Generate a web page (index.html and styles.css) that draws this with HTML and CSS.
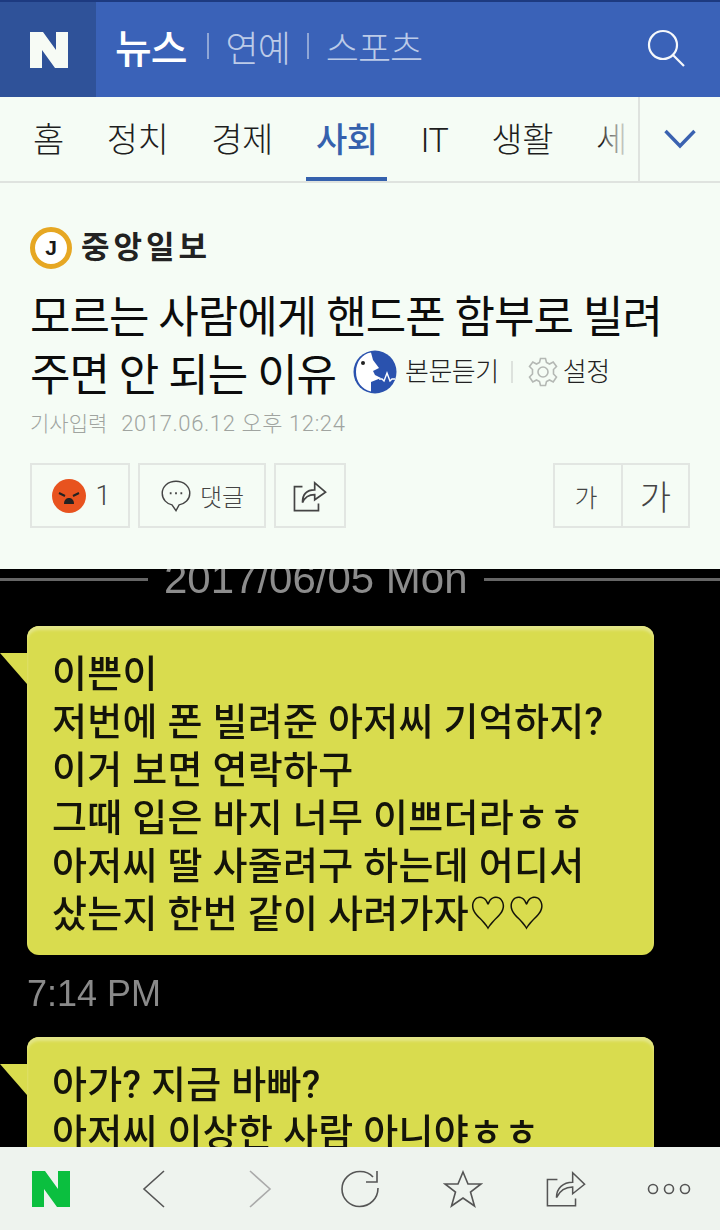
FILE: index.html
```html
<!DOCTYPE html>
<html lang="ko">
<head>
    <meta charset="UTF-8">
    <meta name="viewport" content="width=device-width, initial-scale=1.0">
    <title>모르는 사람에게 핸드폰 함부로 빌려주면 안 되는 이유</title>
    <link rel="stylesheet" href="styles.css">
</head>
<body>
    <header class="top-bar">
        <a class="logo-box">
            <svg width="38" height="36" viewBox="0 0 38 36"><path d="M0 0H13L26 18V0H38V36H25L12 18V36H0Z" fill="#f7fbf5"/></svg>
        </a>
        <nav class="sections">
            <span class="section-on">뉴스</span>
            <i class="section-sep"></i>
            <span>연예</span>
            <i class="section-sep"></i>
            <span>스포츠</span>
        </nav>
        <svg class="search-icon" width="38" height="38" viewBox="0 0 38 38" fill="none" stroke="#f5f8fb" stroke-width="2.2"><circle cx="16" cy="16" r="14"/><path d="M26 26L37 37"/></svg>
    </header>

    <div class="tabs">
        <div class="tab-list">
            <span class="tab">홈</span>
            <span class="tab">정치</span>
            <span class="tab">경제</span>
            <span class="tab tab-on">사회</span>
            <span class="tab">IT</span>
            <span class="tab">생활</span>
            <span class="tab">세</span>
        </div>
        <div class="tab-more">
            <svg width="32" height="20" viewBox="0 0 32 20" fill="none" stroke="#3a62b0" stroke-width="3.4"><path d="M1.5 2L16 17L30.5 2"/></svg>
        </div>
    </div>

    <section class="article-head">
        <div class="press">
            <span class="press-mark">J</span>
            <span class="press-name">중앙일보</span>
        </div>
        <h1 class="title">모르는 사람에게 핸드폰 함부로 빌려<br>주면 안 되는 이유
            <span class="listen">
                <svg class="listen-icon" width="44" height="44" viewBox="0 0 44 44">
                    <circle cx="22" cy="22" r="21.5" fill="#2a52ae"/>
                    <path d="M18 2.5C9 4 3 12 3 22C3 32 9 39.5 18 41.5V32L28 28L22 25L20 21L26 18L20 10Z" fill="#fff"/>
                    <circle cx="10" cy="13" r="2" fill="#222"/>
                    <path d="M26 29H29L31 31L34 23L37 31L39 29H42" fill="none" stroke="#fff" stroke-width="1.4"/>
                </svg>
                <span class="listen-text">본문듣기</span>
                <i class="listen-sep"></i>
                <svg class="gear-icon" width="30" height="30" viewBox="0 0 30 30" fill="none" stroke="#b4b8b4" stroke-width="1.6"><path d="M12.5 1.5H17.5L18.5 5.5L21.5 7L25.2 5L28.5 9.5L25.5 12.5V17L28.5 20L25.2 25L21.5 23L18.5 24.5L17.5 28.5H12.5L11.5 24.5L8.5 23L4.8 25L1.5 20L4.5 17V12.5L1.5 9.5L4.8 5L8.5 7L11.5 5.5Z"/><circle cx="15" cy="15" r="5"/></svg>
                <span class="listen-text">설정</span>
            </span>
        </h1>
        <p class="meta"><span>기사입력</span><span class="meta-date">2017.06.12 오후 12:24</span></p>
        <div class="actions">
            <button class="act act-react">
                <svg width="34" height="34" viewBox="0 0 34 34">
                    <circle cx="17" cy="17" r="17" fill="#e8531f"/>
                    <path d="M7 14L13 17M27 14L21 17" stroke="#222" stroke-width="2"/>
                    <path d="M12 25C12 20 15 19 17 19C19 19 22 20 22 25Z" fill="#222"/>
                </svg>
                <span>1</span>
            </button>
            <button class="act act-reply">
                <svg width="32" height="32" viewBox="0 0 34 36" fill="none" stroke="#444" stroke-width="1.6"><path d="M17 1.5C8 1.5 1.5 7.5 1.5 15C1.5 22 7 27 12.5 28L17 34.5L20.5 28C27 27 32.5 22 32.5 15C32.5 7.5 26 1.5 17 1.5Z"/><path d="M10 15H12M16 15H18M22 15H24" stroke-width="2.2"/></svg>
                <span>댓글</span>
            </button>
            <button class="act act-share">
                <svg width="34" height="32" viewBox="0 0 36 34" fill="none" stroke="#444" stroke-width="1.8"><path d="M10 7H1.5V32.5H27V25"/><path d="M10 24C10 15 15 10.5 23 10.5V3L34.5 13L23 21V15.5C17 15.5 12.5 18 10 24Z"/></svg>
            </button>
            <div class="font-size">
                <button class="act font-small">가</button>
                <button class="act font-big">가</button>
            </div>
        </div>
    </section>

    <main class="photo">
        <div class="date-line"><i class="date-rule-left"></i><span>2017/06/05 Mon</span><i></i></div>
        <div class="bubble">
            <i class="bubble-tail"></i>
            이쁜이<br>
            저번에 폰 빌려준 아저씨 기억하지?<br>
            이거 보면 연락하구<br>
            그때 입은 바지 너무 이쁘더라ㅎㅎ<br>
            아저씨 딸 사줄려구 하는데 어디서<br>
            샀는지 한번 같이 사려가자♡♡
        </div>
        <p class="chat-time">7:14 PM</p>
        <div class="bubble">
            <i class="bubble-tail"></i>
            아가? 지금 바빠?<br>
            아저씨 이상한 사람 아니야ㅎㅎ
        </div>
    </main>

    <footer class="tool-bar">
        <svg width="38" height="36" viewBox="0 0 38 36"><path d="M0 0H13L26 18V0H38V36H25L12 18V36H0Z" fill="#0bbf3f"/></svg>
        <svg width="24" height="38" viewBox="0 0 24 38" fill="none" stroke="#555" stroke-width="1.6"><path d="M22 1L2 19L22 37"/></svg>
        <svg class="tool-forward" width="24" height="38" viewBox="0 0 24 38" fill="none" stroke="#aaa" stroke-width="1.6"><path d="M2 1L22 19L2 37"/></svg>
        <svg width="40" height="38" viewBox="0 0 40 38" fill="none" stroke="#555" stroke-width="1.6"><path d="M33 7C30 3.5 25 1.5 20 1.5C10 1.5 2 9.5 2 19C2 29 10 36.5 19.5 36.5C30 36.5 38 28.5 38 18"/><path d="M37 1V12H26"/></svg>
        <svg width="40" height="38" viewBox="0 0 40 38" fill="none" stroke="#555" stroke-width="1.6"><path d="M20 2L25 14H38L27.5 22L31.5 36L20 28L8.5 36L12.5 22L2 14H15Z"/></svg>
        <svg width="40" height="38" viewBox="0 0 42 38" fill="none" stroke="#555" stroke-width="1.6"><path d="M12 9H1.5V36.5H31V29"/><path d="M11 28C11 18 18 12 28 12V2L40.5 14L28 24V17C21 17 15 20 11 28Z"/></svg>
        <svg width="44" height="12" viewBox="0 0 44 12" fill="none" stroke="#555" stroke-width="1.6"><circle cx="6" cy="6" r="4.5"/><circle cx="22" cy="6" r="4.5"/><circle cx="38" cy="6" r="4.5"/></svg>
    </footer>
</body>
</html>
```

FILE: styles.css
```css
* {
    box-sizing: border-box;
}

body {
    font-family: Roboto, "Noto Sans CJK KR", sans-serif;
    background-color: #f5fcf5;
    margin: 0;
    width: 720px;
    height: 1230px;
    overflow: hidden;
    display: flex;
    flex-direction: column;
}

/* top blue bar */
.top-bar {
    flex: 0 0 97px;
    display: flex;
    align-items: center;
    background-color: #3a62b8;
    border-top: 2px solid #1d3a80;
    padding-right: 35px;
}

.logo-box {
    width: 96px;
    height: 100%;
    padding-left: 2px;
    display: flex;
    align-items: center;
    justify-content: center;
    background-color: #2f5299;
}

.search-icon {
    margin-top: -3px;
}

.sections {
    flex: 1;
    display: flex;
    align-items: center;
    padding: 0 0 8px 19px;
    font-size: 36px;
    font-weight: 300;
    color: #bccbe8;
    letter-spacing: -1px;
}

.section-on {
    margin-right: 3px;
    color: #fff;
    font-size: 40px;
    font-weight: 500;
}

.section-sep {
    width: 2px;
    height: 26px;
    margin: 0 17px;
    background-color: #8fa6d6;
}

/* category tabs */
.tabs {
    flex: 0 0 86px;
    display: flex;
    background-color: #f5fcf5;
    border-bottom: 2px solid #dfe3df;
}

.tab-list {
    position: relative;
    flex: 1;
    display: flex;
    gap: 23px;
    padding-left: 23px;
    overflow: hidden;
}

/* last tab fades out under the arrow */
.tab-list::after {
    content: "";
    position: absolute;
    top: 0;
    right: 0;
    width: 34px;
    height: 100%;
    background: linear-gradient(to right, rgba(245, 252, 245, 0.2), #f5fcf5 80%);
}

.tab {
    height: 84px;
    padding: 0 10px;
    line-height: 86px;
    font-size: 34px;
    font-weight: 300;
    letter-spacing: -0.5px;
    color: #1e1e1e;
    white-space: nowrap;
}

.tab-on {
    color: #3561ad;
    font-weight: 500;
    border-bottom: 4px solid #3561ad;
}

.tab-more {
    width: 82px;
    display: flex;
    align-items: center;
    justify-content: center;
    border-left: 2px solid #dfe3df;
}

/* article heading */
.article-head {
    flex: 0 0 386px;
    padding: 44px 30px 0;
    background-color: #f5fcf5;
}

.press {
    display: flex;
    align-items: center;
    height: 42px;
}

.press-mark {
    width: 42px;
    height: 42px;
    border: 5px solid #e6a723;
    border-radius: 50%;
    background-color: #fff;
    text-align: center;
    font-family: "Liberation Sans", sans-serif;
    font-size: 21px;
    font-weight: 700;
    line-height: 32px;
    color: #1a1a1a;
}

.press-name {
    margin-left: 9px;
    font-size: 31px;
    font-weight: 700;
    letter-spacing: 4px;
    line-height: 44px;
    color: #222;
}

.title {
    margin: 20px 0 0;
    font-size: 44px;
    font-weight: 400;
    line-height: 58px;
    letter-spacing: -1px;
    color: #0c0c0c;
}

.listen {
    display: inline-flex;
    align-items: center;
    margin-left: 7px;
    vertical-align: -3px;
    letter-spacing: -0.5px;
}

.listen-text {
    font-size: 26px;
    font-weight: 300;
    color: #222;
    line-height: 44px;
}

.listen-icon {
    margin-right: 8px;
}

.listen-sep {
    width: 2px;
    height: 22px;
    margin: 0 15px 0 12px;
    background-color: #dde2dd;
}

.gear-icon {
    margin-right: 5px;
}

.meta {
    display: flex;
    gap: 14px;
    margin: 4px 0 0;
    font-size: 21px;
    font-weight: 300;
    line-height: 30px;
    color: #a0a4a0;
}

.meta-date {
    font-size: 22px;
    letter-spacing: 0.6px;
}

.actions {
    display: flex;
    gap: 8px;
    margin-top: 24px;
}

.act {
    display: flex;
    align-items: center;
    justify-content: center;
    height: 65px;
    padding: 0;
    border: 2px solid #e2e6e2;
    background-color: transparent;
    font-family: inherit;
    color: #444;
}

.act-react {
    width: 100px;
    gap: 10px;
    padding-left: 2px;
    font-size: 27px;
    font-weight: 300;
}

.act-reply {
    width: 128px;
    gap: 8px;
    font-size: 24px;
    font-weight: 300;
}

.act-share {
    width: 72px;
}

.font-size {
    display: flex;
    margin-left: auto;
}

.font-small {
    width: 70px;
    padding-right: 4px;
    font-size: 25px;
    font-weight: 300;
}

.font-big {
    width: 69px;
    margin-left: -2px;
    font-size: 34px;
    font-weight: 300;
}

/* the chat picture, a soft upscaled photo in the reference */
.photo {
    flex: 1;
    min-height: 0;
    overflow: hidden;
    background-color: #000;
    padding: 0 66px 0 27px;
    filter: blur(0.6px);
}

.date-line {
    display: flex;
    align-items: center;
    gap: 16px;
    height: 20px;
    margin: 0 -66px 0 -27px;
    font-family: "Liberation Sans", sans-serif;
    font-size: 42px;
    line-height: 20px;
    color: #8c8c8c;
    white-space: nowrap;
}

.date-line i {
    flex: 1;
    height: 3px;
    background-color: #666;
}

.date-line .date-rule-left {
    flex: 0 0 148px;
}

.bubble {
    position: relative;
    margin-top: 37px;
    padding: 24px 0 17px 25px;
    border-radius: 12px;
    background-color: #d9dc4e;
    box-shadow: inset 0 4px 3px #e4e688;
    font-size: 38px;
    font-weight: 500;
    letter-spacing: 0.3px;
    line-height: 48px;
    color: #14140a;
    white-space: nowrap;
}

.bubble-tail {
    position: absolute;
    left: -27px;
    top: 27px;
    width: 27px;
    height: 31px;
    background-color: #d9dc4e;
    clip-path: polygon(0 0, 100% 0, 100% 100%);
}

.chat-time {
    margin: 16px 0 0;
    font-family: "Liberation Sans", sans-serif;
    font-size: 36px;
    line-height: 46px;
    color: #8a8a8a;
}

.chat-time + .bubble {
    margin-top: 20px;
}

/* browser bar at the bottom */
.tool-bar {
    flex: 0 0 83px;
    display: grid;
    grid-template-columns: repeat(7, 1fr);
    align-items: center;
    justify-items: center;
    background-color: #eef3ee;
}

.tool-forward {
    margin-left: 6px;
}
```
